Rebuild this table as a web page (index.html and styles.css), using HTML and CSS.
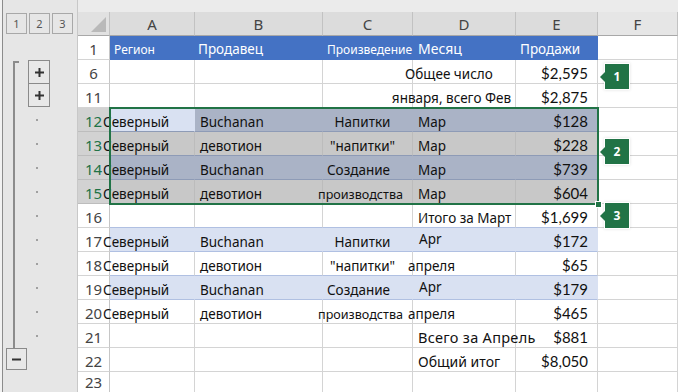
FILE: index.html
```html
<!DOCTYPE html>
<html lang="ru">
<head>
<meta charset="utf-8">
<title>Outline</title>
<link rel="stylesheet" href="styles.css">
</head>
<body>
<div class="app">
  <div class="outline">
    <div class="lvl lvl1">1</div>
    <div class="lvl lvl2">2</div>
    <div class="lvl lvl3">3</div>
    <div class="bracket"></div>
    <div class="obtn plus p6"><svg width="9" height="9" viewBox="0 0 9 9"><rect x="0" y="3.5" width="9" height="2" fill="#333"/><rect x="3.5" y="0" width="2" height="9" fill="#333"/></svg></div>
    <div class="obtn plus p11"><svg width="9" height="9" viewBox="0 0 9 9"><rect x="0" y="3.5" width="9" height="2" fill="#333"/><rect x="3.5" y="0" width="2" height="9" fill="#333"/></svg></div>
    <div class="dot r12"></div><div class="dot r13"></div><div class="dot r14"></div><div class="dot r15"></div><div class="dot r16"></div>
    <div class="dot r17"></div><div class="dot r18"></div><div class="dot r19"></div><div class="dot r20"></div><div class="dot r21"></div>
    <div class="obtn minus"><svg width="9" height="3" viewBox="0 0 9 3"><rect x="0" y="0.5" width="9" height="2" fill="#333"/></svg></div>
  </div>

  <div class="sheet">
    <div class="top"></div>
    <div class="row colhead">
      <div class="corner"></div>
      <div class="ch">A</div><div class="ch">B</div><div class="ch">C</div><div class="ch">D</div><div class="ch">E</div><div class="ch chf">F</div>
    </div>
    <div class="row hdr">
      <div class="rh">1</div>
      <div class="small pl">Регион</div>
      <div class="pl">Продавец</div>
      <div class="small pl">Произведение</div>
      <div class="pl big">Месяц</div>
      <div class="pl">Продажи</div>
      <div class="f"></div>
    </div>
    <div class="row">
      <div class="rh">6</div><div></div><div></div><div></div>
      <div class="d"><span class="ov8">Общее число</span></div><div class="m">$2,595</div><div></div>
    </div>
    <div class="row">
      <div class="rh">11</div><div></div><div></div><div></div>
      <div class="rt">января, всего Фев</div><div class="m">$2,875</div><div></div>
    </div>
    <div class="row sa">
      <div class="rh srh">12</div><div class="a act"><span>Северный</span></div><div class="b">Buchanan</div><div class="c">Напитки</div><div class="d">Мар</div><div class="m">$128</div><div class="f"></div>
    </div>
    <div class="row sb">
      <div class="rh srh">13</div><div class="a"><span>Северный</span></div><div class="b">девотион</div><div class="c">"напитки"</div><div class="d">Мар</div><div class="m">$228</div><div class="f"></div>
    </div>
    <div class="row sa">
      <div class="rh srh">14</div><div class="a"><span>Северный</span></div><div class="b">Buchanan</div><div class="c wide">Создание</div><div class="d">Мар</div><div class="m">$739</div><div class="f"></div>
    </div>
    <div class="row sb">
      <div class="rh srh">15</div><div class="a"><span>Северный</span></div><div class="b">девотион</div><div class="c narrow">производства</div><div class="d">Мар</div><div class="m">$604</div><div class="f"></div>
    </div>
    <div class="row tb">
      <div class="rh">16</div><div></div><div></div><div></div>
      <div class="d">Итого за Март</div><div class="m">$1,699</div><div class="f"></div>
    </div>
    <div class="row band tb">
      <div class="rh">17</div><div class="a"><span>Северный</span></div><div class="b">Buchanan</div><div class="c">Напитки</div><div class="d hi">Apr</div><div class="m">$172</div><div class="f"></div>
    </div>
    <div class="row tb">
      <div class="rh">18</div><div class="a"><span>Северный</span></div><div class="b">девотион</div><div class="c">"напитки"</div><div class="d"><span class="ov">апреля</span></div><div class="m">$65</div><div class="f"></div>
    </div>
    <div class="row band tb">
      <div class="rh">19</div><div class="a"><span>Северный</span></div><div class="b">Buchanan</div><div class="c wide">Создание</div><div class="d hi">Apr</div><div class="m">$179</div><div class="f"></div>
    </div>
    <div class="row">
      <div class="rh">20</div><div class="a"><span>Северный</span></div><div class="b">девотион</div><div class="c narrow">производства</div><div class="d"><span class="ov">апреля</span></div><div class="m">$465</div><div></div>
    </div>
    <div class="row">
      <div class="rh">21</div><div></div><div></div><div></div>
      <div class="d lg1">Всего за Апрель</div><div class="m">$881</div><div></div>
    </div>
    <div class="row">
      <div class="rh">22</div><div></div><div></div><div></div>
      <div class="d lg2">Общий итог</div><div class="m">$8,050</div><div></div>
    </div>
    <div class="row last">
      <div class="rh">23</div><div></div><div></div><div></div><div></div><div></div><div></div>
    </div>

    <div class="selbox"><div class="handle"></div></div>
    <div class="badge b1">1</div>
    <div class="badge b2">2</div>
    <div class="badge b3">3</div>
  </div>
</div>
</body>
</html>
```

FILE: styles.css
```css
* { box-sizing: border-box; }
html, body { margin: 0; padding: 0; }
body {
  width: 678px;
  height: 392px;
  overflow: hidden;
  background: #fff;
  font-family: "Noto Sans", "DejaVu Sans", sans-serif;
  color: #111;
}
.app { display: flex; height: 392px; }

/* outline panel */
.outline {
  width: 78px;
  flex: none;
  background: #e6e6e6;
  border-right: 1px solid #c8c8c8;
  box-shadow: inset 2px 0 0 #f2f2f2, inset 3px 0 0 #8c8c8c;
  display: grid;
  grid-template-columns: 5px 23px 23px 23px 3px;
  grid-template-rows: 12px 24px repeat(15, 24px);
}
.lvl {
  grid-row: 2;
  margin: 1px 1px 2px 1px;
  border: 1px solid #a8a8a8;
  display: flex;
  align-items: center;
  justify-content: center;
  font-size: 11px;
  color: #555;
}
.lvl1 { grid-column: 2; }
.lvl2 { grid-column: 3; }
.lvl3 { grid-column: 4; }
.bracket {
  grid-column: 2;
  grid-row: 4 / 16;
  margin: 1px 0 0 8px;
  border-left: 2px solid #8c8c8c;
  display: flex;
}
.bracket::before {
  content: "";
  width: 4px;
  height: 2px;
  background: #8c8c8c;
}
.obtn {
  border: 1px solid #8a8a8a;
  display: flex;
  align-items: center;
  justify-content: center;
  background: #e8e8e8;
}
.plus { grid-column: 3; margin-right: 1px; }
.p6 { grid-row: 4; margin-bottom: 0; }
.p11 { grid-row: 5; margin-top: -1px; margin-bottom: 1px; }
.minus { grid-column: 2; grid-row: 16; margin: 0 1px 2px 1px; }
.dot {
  grid-column: 3;
  width: 2px;
  height: 2px;
  background: #a0a0a0;
  align-self: center;
  margin-left: 8px;
}
.r12 { grid-row: 6; } .r13 { grid-row: 7; } .r14 { grid-row: 8; } .r15 { grid-row: 9; }
.r16 { grid-row: 10; } .r17 { grid-row: 11; } .r18 { grid-row: 12; } .r19 { grid-row: 13; }
.r20 { grid-row: 14; } .r21 { grid-row: 15; }

/* sheet */
.sheet {
  flex: 1;
  position: relative;
  display: flex;
  flex-direction: column;
  overflow: hidden;
}
.top { height: 12px; flex: none; background: #ebebeb; }
.row {
  display: grid;
  grid-template-columns: 32px 85px 128px 90px 103px 82px 80px;
  height: 24px;
  flex: none;
}
.row.last { height: 20px; }
.row > div {
  border-right: 1px solid #d4d4d4;
  border-bottom: 1px solid #d4d4d4;
  display: flex;
  align-items: flex-end;
  white-space: nowrap;
  font-size: 13.5px;
  min-width: 0;
}
.row.last > div { border-bottom: 0; }

/* column header */
.colhead > .ch {
  background: #dcdcdc;
  border-right-color: #c2c2c2;
  border-bottom-color: #a8a8a8;
  justify-content: center;
  font-size: 15px;
  color: #444;
  padding-bottom: 1px;
}
.colhead > .chf { background: #e6e6e6; }
.colhead > .corner {
  background: #e1e1e1;
  border-right-color: #c2c2c2;
  border-bottom-color: #a8a8a8;
  justify-content: flex-end;
  padding: 0 3px 3px 0;
}
.corner::after {
  content: "";
  width: 0;
  height: 0;
  border-left: 15px solid transparent;
  border-bottom: 15px solid #b9b9b9;
}

/* row headers */
.row > .rh {
  background: #fff;
  border-right-color: #c6c6c6;
  justify-content: center;
  font-size: 15px;
  color: #444;
}
.row.last > .rh { align-items: center; }
.row > .srh { background: #d2d2d2; color: #217346; border-bottom-color: #bdbdbd; }

/* header row */
.hdr > div:not(.rh):not(.f) {
  background: #4472c4;
  border-right-color: #4472c4;
  border-bottom-color: #4472c4;
  color: #fff;
  padding-bottom: 1px;
}
.hdr .small { font-size: 12px; }
.hdr .big { font-size: 14px; }
.hdr .pl { padding-left: 4px; }
.hdr > div:nth-child(3) { padding-left: 3px; }
.hdr > div:nth-child(5) { padding-left: 5px; }

/* cells */
.row > .a span { margin-left: -7px; }
.row > .b { padding-left: 5px; }
.row > .c { justify-content: center; padding-right: 10px; }
.row > .c.narrow { font-size: 12.6px; padding-right: 14px; }
.row > .c.wide { padding-right: 18px; }
.row > .d { padding-left: 5px; }
.row > .d .ov { margin-left: -10px; }
.row > .d .ov8 { margin-left: -13px; }
.row > .hi { padding-bottom: 3px; padding-left: 6px; }
.row > .lg1 { font-size: 14.5px; letter-spacing: 0.3px; }
.row > .lg2 { font-size: 14px; }
.row > .rt { justify-content: flex-end; padding-right: 4px; }
.row > .m {
  justify-content: flex-end;
  padding-right: 9px;
  font-family: Lato, "Noto Sans", sans-serif;
  font-size: 15px;
  padding-bottom: 1px;
}

/* selected table rows */
.sa > div:not(.rh):not(.f) {
  background: #aab3c6;
  border-right-color: #aab3c6;
  border-bottom-color: #8e9bb6;
}
.sa > .act { background: #d9e1f2 !important; border-right-color: #d9e1f2 !important; }
.sb > div:not(.rh):not(.f) {
  background: #c8c8c8;
  border-right-color: #bcbcbc;
  border-bottom-color: #8e9bb6;
}

/* banded rows */
.band > div:not(.rh):not(.f) {
  background: #d9e1f2;
  border-right-color: #d9e1f2;
}
.tb > div:not(.rh):not(.f) { border-bottom-color: #b0c0e2; }

/* overlays */
.selbox {
  position: absolute;
  left: 31px;
  top: 107px;
  width: 490px;
  height: 98px;
  border: 2px solid #217346;
}
.handle {
  position: absolute;
  right: -5px;
  bottom: -5px;
  width: 7px;
  height: 7px;
  background: #217346;
  border: 1px solid #fff;
}
.badge {
  position: absolute;
  left: 527px;
  width: 24px;
  height: 25px;
  background: #217346;
  color: #fff;
  font-size: 12px;
  font-weight: 700;
  display: flex;
  align-items: center;
  justify-content: center;
  box-shadow: 0 0 0 1px #fff, 0 0 3px 1px rgba(0,0,0,0.12);
}
.badge::before {
  content: "";
  position: absolute;
  left: -5px;
  top: 50%;
  margin-top: -5px;
  border-right: 5px solid #217346;
  border-top: 5px solid transparent;
  border-bottom: 5px solid transparent;
}
.b1 { top: 64px; }
.b2 { top: 139px; }
.b3 { top: 203px; }
```
